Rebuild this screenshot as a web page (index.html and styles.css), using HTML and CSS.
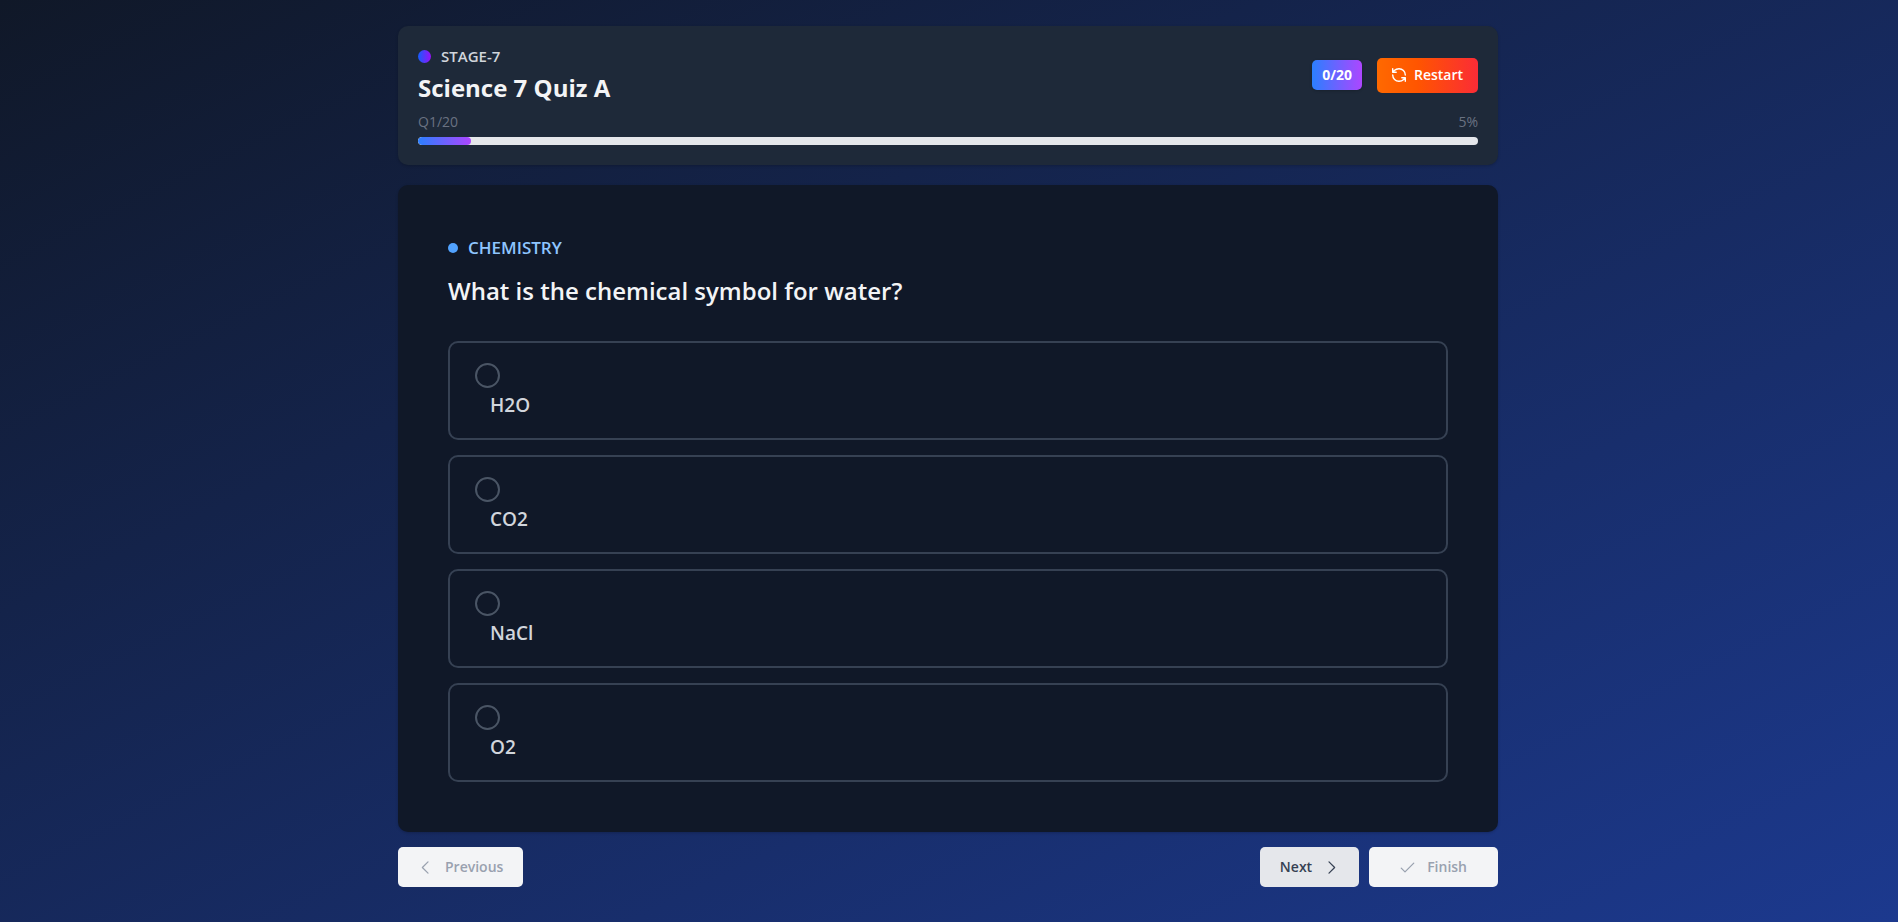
FILE: index.html
```
<!DOCTYPE html>
<html lang="en">
<head>
<meta charset="utf-8">
<title>Science 7 Quiz A</title>
<meta name="viewport" content="width=device-width, initial-scale=1">
<link rel="stylesheet" href="styles.css">
</head>
<body>
<main class="quiz">
  <header class="card header">
    <div class="header-row">
      <div>
        <p class="stage"><span class="stage-dot"></span>STAGE-7</p>
        <h1 class="title">Science 7 Quiz A</h1>
      </div>
      <div class="actions">
        <span class="score">0/20</span>
        <button class="restart" type="button">
          <svg class="icon icon-restart" viewBox="2 2 20 20" aria-hidden="true"><path d="M21 12a9 9 0 0 0-9-9 9.75 9.75 0 0 0-6.74 2.74L3 8M3 3v5h5M3 12a9 9 0 0 0 9 9 9.75 9.75 0 0 0 6.74-2.74L21 16M16 16h5v5"/></svg>
          Restart
        </button>
      </div>
    </div>
    <div class="progress-labels"><span>Q1/20</span><span>5%</span></div>
    <div class="progress"><div class="progress-fill" style="width: 5%"></div></div>
  </header>

  <form id="question" class="card question">
    <p class="topic"><span class="topic-dot"></span>CHEMISTRY</p>
    <h2 class="prompt">What is the chemical symbol for water?</h2>
    <div class="options">
      <label class="option"><input class="radio" type="radio" name="answer" value="H2O"><span class="answer">H2O</span></label>
      <label class="option"><input class="radio" type="radio" name="answer" value="CO2"><span class="answer">CO2</span></label>
      <label class="option"><input class="radio" type="radio" name="answer" value="NaCl"><span class="answer">NaCl</span></label>
      <label class="option"><input class="radio" type="radio" name="answer" value="O2"><span class="answer">O2</span></label>
    </div>
  </form>

  <nav class="controls">
    <button class="control previous" type="button" disabled>
      <svg class="icon" viewBox="0 0 24 24" aria-hidden="true"><path d="M16 3l-9 9 9 9"/></svg>
      Previous
    </button>
    <div class="controls-end">
      <button class="control next" type="button">
        Next
        <svg class="icon" viewBox="0 0 24 24" aria-hidden="true"><path d="M8 3l9 9-9 9"/></svg>
      </button>
      <button class="control finish" type="button" disabled>
        <svg class="icon" viewBox="0 0 24 24" aria-hidden="true"><path d="M2 13l6 6L22 5"/></svg>
        Finish
      </button>
    </div>
  </nav>
</main>
</body>
</html>
```
FILE: styles.css
```
* {
  box-sizing: border-box;
}

body {
  margin: 0;
  min-height: 100vh;
  padding: 26px 22px 35px 20px;
  background: linear-gradient(to bottom right, #101828, #1c398e);
  font-family: "Segoe UI", "Open Sans", "Noto Sans", sans-serif;
  font-size: 14px;
  line-height: 20px;
  color: #f3f4f6;
}

h1, h2, p {
  margin: 0;
}

button {
  font: inherit;
  border: 0;
  border-radius: 5px;
  display: flex;
  align-items: center;
  justify-content: center;
}

.quiz {
  max-width: 1100px;
  margin: 0 auto;
}

.card {
  border-radius: 10px;
  box-shadow: 0 1px 3px rgba(0, 0, 0, 0.2);
}

.header {
  background: #1e2939;
  padding: 20px;
  margin-bottom: 20px;
}

.header-row {
  display: flex;
  align-items: center;
  justify-content: space-between;
  margin-bottom: 8px;
}

.stage {
  display: flex;
  align-items: center;
  gap: 10px;
  font-size: 15px;
  font-weight: 600;
  color: #d1d5dc;
}

.stage-dot {
  width: 13px;
  height: 13px;
  border-radius: 50%;
  background: linear-gradient(to right, #155dfc, #9810fa);
}

.title {
  font-size: 24px;
  line-height: 32px;
  font-weight: 700;
  margin-top: 6px;
}

.actions {
  display: flex;
  align-items: center;
  gap: 15px;
}

.score {
  padding: 5px 10px;
  border-radius: 5px;
  background: linear-gradient(to right, #2b7fff, #ad46ff);
  color: #fff;
  font-weight: 700;
  box-shadow: 0 1px 3px rgba(0, 0, 0, 0.2);
}

.restart {
  height: 35px;
  padding: 0 15px;
  gap: 8px;
  background: linear-gradient(to right, #ff6900, #ff5500 40%, #fb2c36);
  color: #fff;
  font-weight: 600;
}

.icon {
  width: 15px;
  height: 15px;
  fill: none;
  stroke: currentColor;
  stroke-width: 2;
  stroke-linecap: round;
  stroke-linejoin: round;
}

.icon-restart {
  width: 14px;
  height: 14px;
}

.progress-labels {
  display: flex;
  justify-content: space-between;
  margin-bottom: 5px;
  color: #6a7282;
}

.progress {
  height: 8px;
  border-radius: 4px;
  background: #e5e7eb;
  overflow: hidden;
}

.progress-fill {
  height: 100%;
  border-radius: 4px;
  background: linear-gradient(to right, #2b7fff, #ad46ff);
}

.question {
  background: #101828;
  padding: 50px;
  margin-bottom: 15px;
}

.topic {
  display: flex;
  align-items: center;
  gap: 10px;
  font-size: 17px;
  line-height: 26px;
  font-weight: 600;
  color: #8ec5ff;
}

.topic-dot {
  width: 10px;
  height: 10px;
  border-radius: 50%;
  background: #51a2ff;
}

.prompt {
  margin: 10px 0 30px;
  font-size: 24px;
  line-height: 40px;
  font-weight: 600;
}

.options {
  display: flex;
  flex-direction: column;
  gap: 15px;
}

.option {
  display: flex;
  flex-direction: column;
  align-items: flex-start;
  padding: 20px 25px 18px;
  border: 2px solid #364153;
  border-radius: 10px;
}

.radio {
  appearance: none;
  width: 25px;
  height: 25px;
  margin: 0 0 2px;
  border: 2px solid #4a5565;
  border-radius: 50%;
}

.radio:checked {
  background: #51a2ff;
}

.answer {
  padding-left: 15px;
  font-size: 19px;
  line-height: 30px;
  font-weight: 600;
  color: #d1d5dc;
}

.controls,
.controls-end {
  display: flex;
  justify-content: space-between;
  gap: 10px;
}

.control {
  height: 40px;
  padding: 0 20px;
  gap: 12px;
  font-weight: 600;
}

.previous,
.finish {
  background: #f3f4f6;
  color: #99a1af;
}

.next {
  background: #e5e7eb;
  color: #364153;
}

.finish {
  padding: 0 31px;
}
```
